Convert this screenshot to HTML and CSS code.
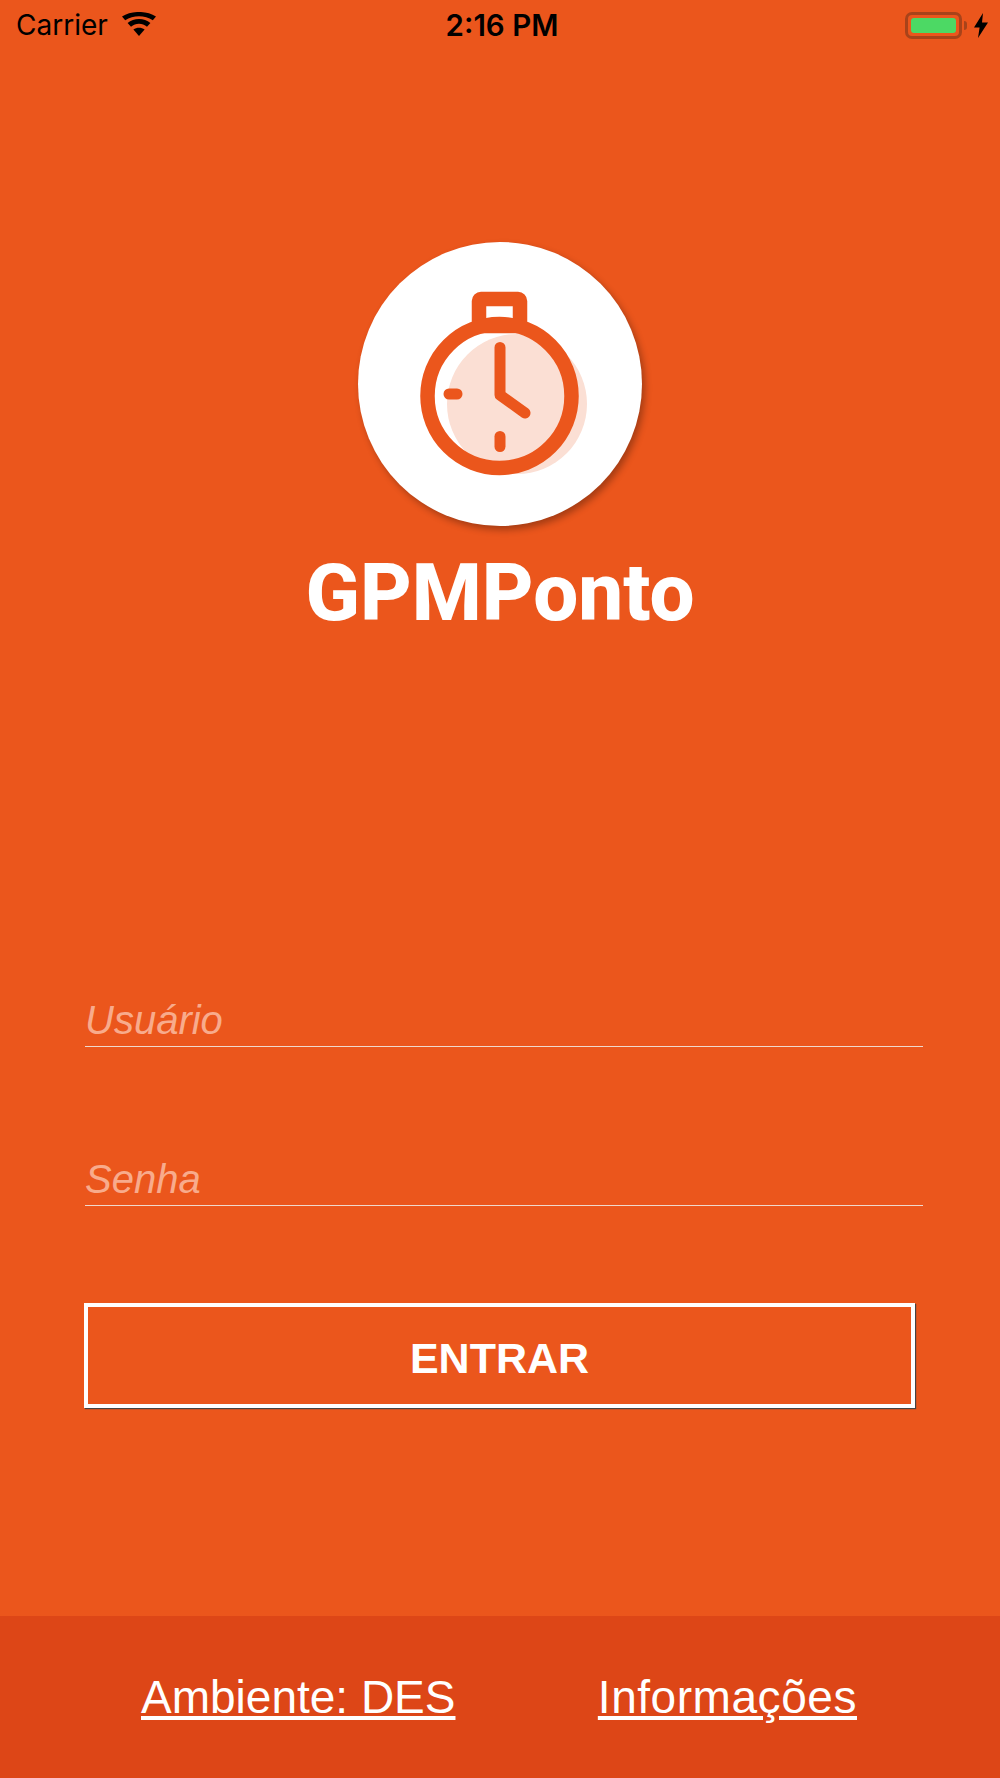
FILE: index.html
```html
<!DOCTYPE html>
<html lang="pt-BR">
<head>
    <meta charset="UTF-8">
    <meta name="viewport" content="width=device-width, initial-scale=1.0">
    <title>GPMPonto</title>
    <link rel="stylesheet" href="styles.css">
</head>
<body>

<div class="page">
    <div class="status-bar">
        <div class="status-left">
            <span>Carrier</span>
            <svg class="wifi" viewBox="0 0 34 24" width="34" height="24">
                <path d="M17 24 L11.4 17.6 C14.6 15 19.4 15 22.6 17.6 Z"/>
                <path d="M9 14.8 L5.6 11 C11.8 5.6 22.2 5.6 28.4 11 L25 14.8 C20.4 10.8 13.6 10.8 9 14.8 Z"/>
                <path d="M3.2 8.2 L0 4.6 C9.4 -1.6 24.6 -1.6 34 4.6 L30.8 8.2 C22.8 2.8 11.2 2.8 3.2 8.2 Z"/>
            </svg>
        </div>
        <div class="status-time">2:16 PM</div>
        <div class="status-right">
            <div class="battery"><div class="battery-level"></div></div>
            <div class="battery-nib"></div>
            <svg class="bolt" viewBox="0 0 14 25" width="14" height="25">
                <path d="M9 0 L0 14.5 H5.6 L4 25 L14 9.5 H8 Z"/>
            </svg>
        </div>
    </div>

    <div class="logo">
        <svg viewBox="0 0 284 284" width="284" height="284">
            <circle class="clock-shade" cx="159" cy="162" r="70"/>
            <rect class="clock-line" x="121" y="57" width="41" height="27" rx="2"/>
            <circle class="clock-line" cx="141.5" cy="154" r="72"/>
            <path class="clock-hand" d="M142 105.500 V153 L167 171"/>
            <path class="clock-hand" d="M91 152 H99"/>
            <path class="clock-hand" d="M142 194.500 V204.500"/>
        </svg>
    </div>
    <h1 class="app-name">GPMPonto</h1>

    <form class="login-form">
        <div class="field"><span>Usuário</span></div>
        <div class="field"><span>Senha</span></div>
        <button type="button" class="btn-entrar">ENTRAR</button>
    </form>

    <div class="footer">
        <a href="#">Ambiente: DES</a>
        <a href="#" class="link-info">Informações</a>
    </div>
</div>

</body>
</html>
```

FILE: styles.css
```css
/* Tela de login */
body {
    margin: 0;
    background-color: #eb561c;
    font-family: "Liberation Sans", Arial, sans-serif;
}

.page {
    display: flex;
    flex-direction: column;
    align-items: center;
    height: 1778px;
    overflow: hidden;
}

.status-bar {
    display: grid;
    grid-template-columns: 1fr auto 1fr;
    align-items: center;
    width: 100%;
    height: 50px;
    padding: 0 12px 0 16px;
    box-sizing: border-box;
    font-family: Inter, sans-serif;
    font-size: 28px;
    color: #000;
}

.status-left {
    display: flex;
    align-items: center;
    gap: 14px;
}

.wifi {
    margin-top: -2px;
}

.status-time {
    font-size: 29.5px;
    font-weight: 600;
}

.status-right {
    display: flex;
    align-items: center;
    justify-content: flex-end;
}

.battery {
    width: 57px;
    height: 27px;
    padding: 3px;
    border: 3px solid #a8431a;
    border-radius: 7px;
    box-sizing: border-box;
}

.battery-level {
    height: 100%;
    background-color: #4cd964;
    border-radius: 3px;
}

.battery-nib {
    width: 3px;
    height: 9px;
    margin-left: 2px;
    background-color: #a8431a;
    border-radius: 0 4px 4px 0;
}

.bolt {
    margin-left: 7px;
}

.logo {
    width: 284px;
    height: 284px;
    margin-top: 192px;
    background-color: white;
    border-radius: 50%;
    box-shadow: 3px 4px 7px rgba(0, 0, 0, 0.3);
}

.clock-shade {
    fill: #fbdfd4;
}

.clock-line {
    fill: none;
    stroke: #eb561c;
    stroke-width: 14.5;
    stroke-linejoin: round;
}

.clock-hand {
    fill: none;
    stroke: #eb561c;
    stroke-width: 11;
    stroke-linecap: round;
    stroke-linejoin: round;
}

.app-name {
    margin: 24px 0 0;
    font-family: Roboto, sans-serif;
    font-size: 80px;
    font-weight: 800;
    line-height: 86px;
    color: white;
}

.login-form {
    width: 838px;
    margin: 364px 0 0 85px;
    align-self: flex-start;
}

.field {
    height: 46px;
    margin-bottom: 112px;
    border-bottom: 1.5px solid #f0d8cc;
    font-size: 40px;
    font-style: italic;
    line-height: 40px;
    color: #f8ab8c;
}

.btn-entrar {
    display: block;
    width: 831px;
    height: 105px;
    margin: -15px 0 0 -1px;
    padding-top: 6px;
    background-color: transparent;
    border: 4px solid white;
    box-shadow: 1px 1px 1px #444;
    font-family: "Liberation Sans", Arial, sans-serif;
    font-size: 43px;
    font-weight: bold;
    color: white;
}

.footer {
    display: flex;
    justify-content: space-between;
    align-items: center;
    align-self: stretch;
    height: 162px;
    margin-top: auto;
    padding: 0 143px 0 141px;
    background-color: #dd4617;
    font-size: 46px;
}

.footer a {
    color: white;
}

.link-info {
    letter-spacing: 0.55px;
}
```
